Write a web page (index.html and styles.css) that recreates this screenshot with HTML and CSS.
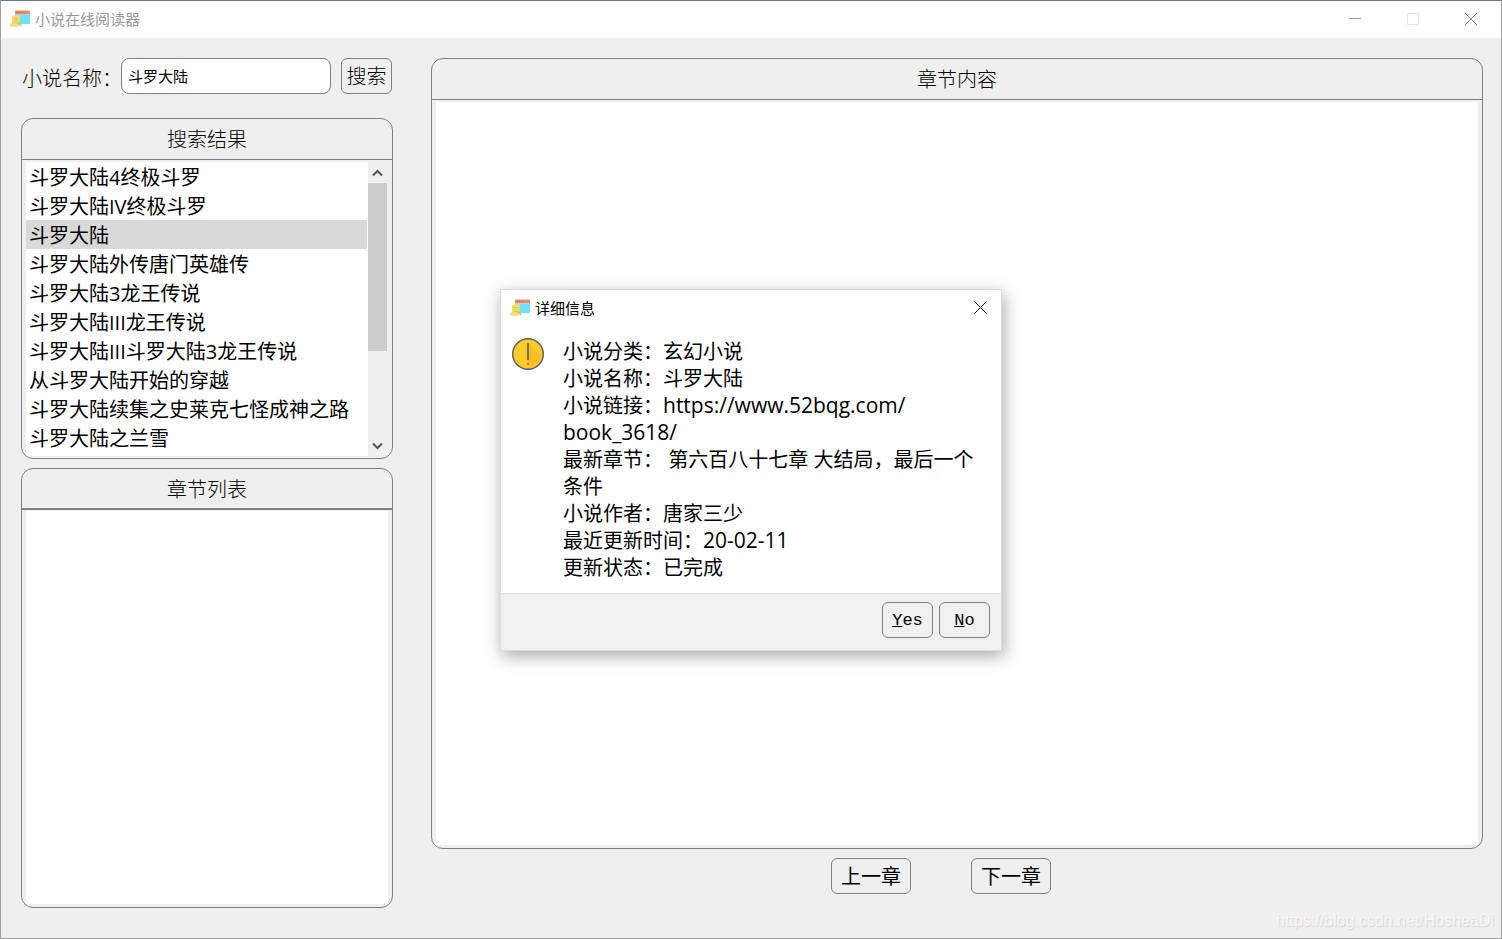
FILE: index.html
```html
<!DOCTYPE html>
<html lang="zh-CN">
<head>
  <meta charset="UTF-8">
  <meta name="viewport" content="width=device-width, initial-scale=1.0">
  <title>小说在线阅读器</title>
  <link rel="stylesheet" href="styles.css">
</head>
<body>
<svg class="defs" width="0" height="0" aria-hidden="true">
  <symbol id="app-icon" viewBox="0 0 20 17">
    <path d="M5 1.5Q5 .5 6 .5H19Q20 .5 20 1.5V4.5H5Z" fill="#e58d68"/>
    <path d="M5 4.5H20V13Q20 14 19 14H5Z" fill="#70e1fb"/>
    <path d="M6.5 2.3H7.5M9 2.3H10M11.5 2.3H12.5" stroke="#bd5c45"/>
    <path d="M3 5.5H10.5Q9.5 7 9.5 9V15Q9 16.7 7 16.7H1.5Q0 16.5 0 15V13.5H2V8Q2 6 3 5.5Z" fill="#f3dd70"/>
    <path d="M4 8.5H8M4 10.5H8M4 12.5H7" stroke="#e2c860"/>
    <path d="M8 11.5L12 15.5L11 16.5L7 13Z" fill="#d3c463"/>
  </symbol>
</svg>

<div class="window">
  <header class="titlebar">
    <svg class="app-icon"><use href="#app-icon"/></svg>
    <h1>小说在线阅读器</h1>
    <div class="window-buttons">
      <button aria-label="最小化"><svg width="12" height="12" viewBox="0 0 12 12"><path d="M0 5.5H12" stroke="#999"/></svg></button>
      <button aria-label="最大化" disabled><svg width="12" height="12" viewBox="0 0 12 12"><path d="M.5 .5H11.5V11.5H.5Z" stroke="#e5e5e5" fill="none"/></svg></button>
      <button aria-label="关闭"><svg width="12" height="12" viewBox="0 0 12 12"><path d="M0 0L12 12M12 0L0 12" stroke="#888"/></svg></button>
    </div>
  </header>

  <main class="content">
    <div class="sidebar">
      <form class="search" onsubmit="return false">
        <label for="novel">小说名称：</label>
        <input id="novel" type="text" value="斗罗大陆">
        <button class="btn thin">搜索</button>
      </form>

      <section class="panel results">
        <h2>搜索结果</h2>
        <div class="list-area">
          <ul class="list" role="listbox" aria-label="搜索结果">
            <li role="option">斗罗大陆4终极斗罗</li>
            <li role="option">斗罗大陆IV终极斗罗</li>
            <li role="option" class="selected" aria-selected="true">斗罗大陆</li>
            <li role="option">斗罗大陆外传唐门英雄传</li>
            <li role="option">斗罗大陆3龙王传说</li>
            <li role="option">斗罗大陆III龙王传说</li>
            <li role="option">斗罗大陆III斗罗大陆3龙王传说</li>
            <li role="option">从斗罗大陆开始的穿越</li>
            <li role="option">斗罗大陆续集之史莱克七怪成神之路</li>
            <li role="option">斗罗大陆之兰雪</li>
          </ul>
          <div class="scrollbar">
            <button aria-label="向上滚动"><svg width="11" height="8" viewBox="0 0 11 8"><path d="M1 6.5L5.5 2L10 6.5" stroke="#555" stroke-width="2" fill="none"/></svg></button>
            <div class="track"><div class="thumb"></div></div>
            <button aria-label="向下滚动"><svg width="11" height="8" viewBox="0 0 11 8"><path d="M1 1.5L5.5 6L10 1.5" stroke="#555" stroke-width="2" fill="none"/></svg></button>
          </div>
        </div>
      </section>

      <section class="panel chapters">
        <h2>章节列表</h2>
        <div class="blank"></div>
      </section>
    </div>

    <div class="reader">
      <section class="panel text">
        <h2>章节内容</h2>
        <div class="blank"></div>
      </section>
      <nav class="pager">
        <button class="btn">上一章</button>
        <button class="btn">下一章</button>
      </nav>
    </div>
  </main>

  <div class="overlay">
    <div class="dialog" role="dialog" aria-labelledby="dialog-title">
      <div class="dialog-title">
        <svg class="app-icon"><use href="#app-icon"/></svg>
        <h2 id="dialog-title">详细信息</h2>
        <button aria-label="关闭"><svg width="13" height="13" viewBox="0 0 13 13"><path d="M.5 .5L12.5 12.5M12.5 .5L.5 12.5" stroke="#111"/></svg></button>
      </div>
      <div class="dialog-body">
        <svg class="warn" width="34" height="34" viewBox="0 0 34 34">
          <circle cx="17" cy="17" r="15.3" fill="#fecb2f" stroke="#5c5f60" stroke-width="1.5"/>
          <path d="M17 6L30 19Q28 28 17 29Z" fill="#f3bd2b"/>
          <path d="M17 6V23" stroke="#6c5a22" stroke-width="1.6"/>
          <circle cx="17" cy="27" r="1.1" fill="#a37d25"/>
        </svg>
        <div class="info">
          <p>小说分类：玄幻小说</p>
          <p>小说名称：斗罗大陆</p>
          <p>小说链接：<span class="latin">https://www.52bqg.com/<wbr>book_3618/</span></p>
          <p>最新章节： 第六百八十七章 大结局，最后一个条件</p>
          <p>小说作者：唐家三少</p>
          <p>最近更新时间：<span class="latin">20-02-11</span></p>
          <p>更新状态：已完成</p>
        </div>
      </div>
      <div class="dialog-actions">
        <button class="btn mono"><u>Y</u>es</button>
        <button class="btn mono"><u>N</u>o</button>
      </div>
    </div>
  </div>

  <span class="watermark">https://blog.csdn.net/HosheaDi</span>
</div>
</body>
</html>
```
FILE: styles.css
```css
* {
  box-sizing: border-box;
}

body {
  margin: 0;
  font-family: "Open Sans", "Noto Sans CJK SC", sans-serif;
  font-size: 20px;
  color: #000;
}

h1, h2, p, ul {
  margin: 0;
  padding: 0;
  font-weight: inherit;
}

button {
  padding: 0;
  border: 0;
  background: none;
  color: inherit;
  font: inherit;
}

.defs {
  position: absolute;
}

.window {
  position: relative;
  display: flex;
  flex-direction: column;
  height: 100vh;
  border: 1px solid #a0a0a0;
  border-top-color: #6478a4;
  background: #efefef;
}

.app-icon {
  width: 20px;
  height: 17px;
}

.titlebar {
  display: flex;
  align-items: center;
  height: 37px;
  padding: 0 1px 2px 9px;
  background: #fff;
}

.titlebar h1 {
  flex: 1;
  margin-left: 5px;
  font-size: 15px;
  color: #999;
}

.window-buttons {
  display: flex;
}

.window-buttons button {
  display: flex;
  align-items: center;
  justify-content: center;
  width: 58px;
  height: 35px;
}

.content {
  flex: 1;
  display: flex;
  gap: 38px;
  min-height: 0;
  padding: 20px 18px 30px 20px;
}

.sidebar {
  display: flex;
  flex-direction: column;
  width: 372px;
}

.search {
  display: flex;
  align-items: center;
  height: 36px;
  margin-bottom: 24px;
}

.search label {
  width: 100px;
  padding: 2px 0 0 1px;
  font-weight: 300;
  white-space: nowrap;
}

.search input {
  width: 210px;
  height: 36px;
  margin-right: 10px;
  padding: 0 6px 2px;
  border: 1px solid #808080;
  border-radius: 8px;
  background: #fff;
  color: #000;
  font-family: inherit;
  font-size: 15px;
}

.btn {
  min-width: 51px;
  height: 36px;
  border: 1px solid #808080;
  border-radius: 6px;
  line-height: 36px;
}

.btn.thin {
  font-weight: 300;
}

.btn.mono {
  font-family: "Liberation Mono", monospace;
  font-size: 17px;
}

.panel {
  display: flex;
  flex-direction: column;
  border: 1px solid #808080;
  border-radius: 12px;
}

.panel h2 {
  height: 41px;
  border-bottom: 1px solid #808080;
  font-size: 20px;
  font-weight: 300;
  line-height: 42px;
  text-align: center;
}

.results {
  margin-bottom: 9px;
}

.list-area {
  display: flex;
  padding: 2px 4px;
}

.list {
  flex: 1;
  height: 294px;
  background: #fff;
  list-style: none;
}

.list li {
  height: 29px;
  margin-right: 1px;
  padding-left: 3px;
  line-height: 31px;
  white-space: nowrap;
}

.list .selected {
  background: #d9d9d9;
}

.scrollbar {
  display: flex;
  flex-direction: column;
  width: 20px;
  padding-right: 1px;
}

.scrollbar button {
  display: flex;
  align-items: center;
  justify-content: center;
  height: 21px;
}

.track {
  flex: 1;
}

.thumb {
  height: 168px;
  background: #cdcdcd;
}

.chapters {
  flex: 1;
}

.chapters h2 {
  border-bottom-width: 2px;
}

.blank {
  flex: 1;
  margin: 2px 4px 3px;
  background: #fff;
}

.chapters .blank {
  margin-top: 1px;
}

.reader {
  flex: 1;
  display: flex;
  flex-direction: column;
}

.text {
  flex: 1;
}

.pager {
  display: flex;
  justify-content: center;
  gap: 60px;
  padding: 9px 32px 14px 0;
}

.pager .btn {
  width: 80px;
}

.overlay {
  position: absolute;
  inset: 0;
  display: flex;
  align-items: center;
  justify-content: center;
}

.dialog {
  width: 502px;
  border: 1px solid #dcdcdc;
  background: #fff;
  box-shadow: 2px 5px 16px rgba(0, 0, 0, 0.35);
}

.dialog-title {
  display: flex;
  align-items: center;
  height: 36px;
  padding: 0 14px 0 9px;
}

.dialog-title h2 {
  flex: 1;
  margin-left: 5px;
  font-size: 15px;
}

.dialog-title button {
  display: flex;
}

.dialog-body {
  display: flex;
  align-items: flex-start;
  gap: 18px;
  padding: 11px 18px 12px 10px;
}

.warn {
  flex: none;
}

.info {
  flex: 1;
  padding-top: 1px;
  line-height: 27px;
}

.latin {
  font-size: 21px;
  line-height: 1;
}

.dialog-actions {
  display: flex;
  justify-content: flex-end;
  gap: 6px;
  padding: 8px 11px 12px;
  border-top: 1px solid #dfdfdf;
  background: #f0f0f0;
}

.watermark {
  position: absolute;
  right: 7px;
  bottom: 8px;
  font-family: "Liberation Sans", Arial, sans-serif;
  font-size: 16px;
  color: #f6f6f6;
  text-shadow: 1px 1px 1px #d8d8d8;
}
```
